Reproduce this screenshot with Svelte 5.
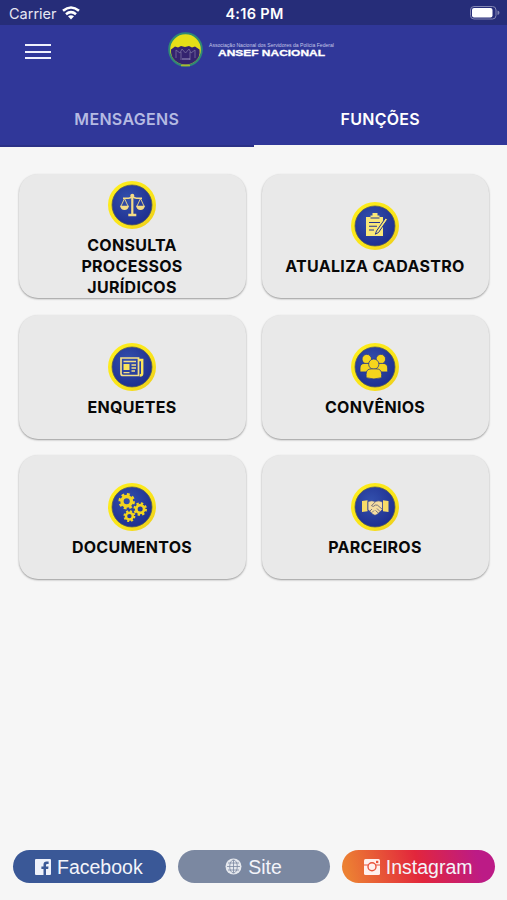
<script lang="ts">
	type IconName = "scales" | "clipboard" | "news" | "people" | "gears" | "handshake";

	const tiles: { label: string; icon: IconName }[] = [
		{ label: "CONSULTA PROCESSOS JURÍDICOS", icon: "scales" },
		{ label: "ATUALIZA CADASTRO", icon: "clipboard" },
		{ label: "ENQUETES", icon: "news" },
		{ label: "CONVÊNIOS", icon: "people" },
		{ label: "DOCUMENTOS", icon: "gears" },
		{ label: "PARCEIROS", icon: "handshake" },
	];

	const gears = [
		{ x: 18.7, y: 18.3, s: 0.97 },
		{ x: 32.2, y: 26, s: 0.8 },
		{ x: 21.4, y: 33.1, s: 0.7 },
	];

	let active = $state("funcoes");
</script>

{#snippet badge(name: IconName)}
	<svg class="badge" viewBox="0 0 48 48" aria-hidden="true">
		<defs>
			<radialGradient id="disc-{name}" cx="40%" cy="35%" r="65%">
				<stop offset="0" stop-color="#3350ad" />
				<stop offset="1" stop-color="#1f3090" />
			</radialGradient>
			<linearGradient id="ring-{name}" x1="0" y1="0" x2="1" y2="1">
				<stop offset="0" stop-color="#fff01c" />
				<stop offset="0.7" stop-color="#f8e11a" />
				<stop offset="1" stop-color="#e8c41e" />
			</linearGradient>
		</defs>
		<circle cx="24" cy="24" r="24" fill="url(#ring-{name})" />
		<circle cx="24" cy="24" r="20" fill="url(#disc-{name})" stroke="#5b6055" stroke-width="0.8" />
		{#if name === "scales"}
			<g fill="none" stroke="#f5dc86" stroke-width="1.2" stroke-linejoin="round">
				<path d="M24.3 14v20" stroke-width="2.2" />
				<path d="M15 17.2h5.5q2 0 4-1.8 2 1.8 4 1.8H34" stroke-width="1.6" />
				<path d="M16.5 17.5l-3.7 8M16.5 17.5l3.7 8M32.5 17.5l-3.7 8M32.5 17.5l3.7 8" stroke-width="0.9" />
			</g>
			<path d="M12 24.8h9q-.8 4.2-4.500 4.200T12 24.800zM28 24.800h9q-.8 4.200-4.500 4.200T28 24.800zM20.300 32.800h8v2.400h-8z" fill="#f5dc86" />
			<circle cx="24.3" cy="14.8" r="2" fill="#f5dc86" />
		{:else if name === "clipboard"}
			<path d="M15 15h4.500v-1.500h2V11h5v2.500h2V15H32v19H15z" fill="#fae878" />
			<path d="M19.500 16h9M18 20.500h11M18 24.200h8M18 28h5" stroke="#23358f" stroke-width="1.1" />
			<path d="M34.500 16l-9 13-1.200 3.200 3.200-1.700 9-13z" fill="#fae878" stroke="#23358f" stroke-width="1" />
		{:else if name === "news"}
			<path d="M13 15h17.500v17.500H15q-2 0-2-2z" fill="none" stroke="#f5df85" stroke-width="1.7" />
			<path d="M30.500 17h3.700v13.500q0 2-2.500 2" fill="none" stroke="#fae45a" stroke-width="2.4" />
			<path d="M15.500 21h6v6h-6z" fill="#fae45a" />
			<path d="M15.500 18.500H28M23.500 22H28M23.500 25H28M23.500 28H27M15.500 29.700h6" stroke="#f5df85" stroke-width="1.3" />
		{:else if name === "people"}
			<g transform="translate(-0.7 0.3) scale(0.97)" fill="#f6d51d" stroke="#23358f" stroke-width="0.8">
				<circle cx="17" cy="16.3" r="4.9" />
				<path d="M10 29.500v-4q0-4.800 5-4.800h5q4 0 4 4v4.800z" />
				<circle cx="31.500" cy="16.3" r="4.9" />
				<path d="M38.500 29.500v-4q0-4.800-5-4.800h-5q-4 0-4 4v4.800z" />
				<circle cx="24.2" cy="21.5" r="5.3" />
				<path d="M16.300 35.500V32q0-5.600 5.300-5.600h5.400q5.300 0 5.300 5.600v3.500q-8 2.500-16 0z" />
			</g>
		{:else if name === "gears"}
			{#each gears as gear}
				<g transform="translate({gear.x} {gear.y}) scale({gear.s})" fill="none" stroke="#f3d51e">
					<circle r="4.9" stroke-width="3.5" />
					<circle r="7.1" stroke-width="2.8" stroke-dasharray="2.9 2.676" />
				</g>
			{/each}
		{:else}
			<path d="M11 18l5.500-.7v11L11 29zM37.500 18l-5.500-.7v11l5.500.7z" fill="#f8dc67" />
			<path
				d="M17 18.500q4-1.500 7 0 4-1.500 7.500.5v7.500L26 31.500q-2 1.500-4 0L17 26.500z"
				fill="#f5dda0"
				stroke="#23358f"
				stroke-width="0.6"
			/>
			<path
				d="M24.500 18.700l-4 4q1.500 1.800 4-.7l2 .2 5 4.300M19 28l2-2M21 29.500l2-2M26 25.500l3 3M24.500 27.500l3 2.700"
				fill="none"
				stroke="#585874"
				stroke-width="0.8"
			/>
		{/if}
	</svg>
{/snippet}

<div class="screen">
	<div class="status">
		<div class="carrier">
			<span>Carrier</span>
			<svg width="18" height="14" viewBox="0 0 18 14" aria-hidden="true">
				<g fill="none" stroke="#fff" stroke-width="2.6">
					<path d="M1 4.800Q9-1.800 17 4.800" />
					<path d="M4 8.200Q9 4 14 8.200" />
				</g>
				<path d="M6 10.300Q9 8 12 10.300L9 13.400z" fill="#fff" />
			</svg>
		</div>
		<span class="time">4:16 PM</span>
		<svg class="battery" width="30" height="14" viewBox="0 0 30 14" aria-hidden="true">
			<rect x="0.5" y="0.5" width="25.5" height="12.5" rx="3.5" fill="none" stroke="#8487b4" />
			<rect x="2" y="2" width="20.5" height="9.5" rx="2" fill="#fff" />
			<path d="M27.500 4.500q2 .4 2 2.300t-2 2.300z" fill="#8487b4" />
		</svg>
	</div>

	<header>
		<button class="menu" aria-label="Menu"><span></span><span></span><span></span></button>
		<svg class="logo" width="168" height="38" viewBox="0 0 168 38" role="img" aria-label="ANSEF Nacional">
			<circle cx="18.5" cy="18.5" r="16.3" fill="#e5df17" stroke="#2f8975" stroke-width="2" />
			<path d="M4 18.500l4-3 3 1 3-1.500 4 1 4-1 3 1.500 3-1 4.500 3q1 7-3.500 11T18.500 33.500 8 29.500 4 18.500z" fill="#34236f" />
			<path d="M9 27v-8l4 3 2-4 3.500 4 3.500-4 2 4 4-3v8M14 21v8M23 21v8" fill="none" stroke="#7870a0" stroke-width="0.8" />
			<path d="M15 28h8" stroke="#9b96bf" />
			<path d="M14 34.500h9" stroke="#a9b931" stroke-width="1.5" />
			<text class="logo-small" x="42" y="16" textLength="125" lengthAdjust="spacingAndGlyphs">Associação Nacional dos Servidores da Polícia Federal</text>
			<text class="logo-name" x="51" y="25" textLength="107" lengthAdjust="spacingAndGlyphs">ANSEF NACIONAL</text>
		</svg>
	</header>

	<nav>
		<button class:active={active === "mensagens"} onclick={() => (active = "mensagens")}>MENSAGENS</button>
		<button class:active={active === "funcoes"} onclick={() => (active = "funcoes")}>FUNÇÕES</button>
	</nav>

	<main>
		{#each tiles as tile}
			<button class="tile">
				{@render badge(tile.icon)}
				<span class="label">{tile.label}</span>
			</button>
		{/each}
	</main>

	<footer>
		<button class="pill facebook">
			<svg width="16" height="16" viewBox="0 0 16 16" aria-hidden="true">
				<path
					d="M1 0h14q1 0 1 1v14q0 1-1 1h-4v-6h2.200l.3-2.400H11V6.100q0-1.200 1.200-1.200h1.400V2.600h-2Q8.500 2.600 8.500 5.600v2H6.400V10h2.100v6H1q-1 0-1-1V1q0-1 1-1z"
					fill="#eef1fa"
				/>
			</svg>
			<span>Facebook</span>
		</button>
		<button class="pill site">
			<svg width="17" height="17" viewBox="0 0 17 17" aria-hidden="true">
				<circle cx="8.5" cy="8.5" r="8" fill="#e5e8ee" />
				<g fill="none" stroke="#7b88a1" stroke-width="0.8">
					<path d="M8.500 2v13M2 8.500h13M3 5h11M3 12h11" />
					<ellipse cx="8.5" cy="8.5" rx="3.8" ry="6.5" />
				</g>
			</svg>
			<span>Site</span>
		</button>
		<button class="pill instagram">
			<svg width="16" height="16" viewBox="0 0 16 16" aria-hidden="true">
				<rect width="16" height="16" rx="1.5" fill="#fff0ee" />
				<path d="M0 6h4.500M11.500 6H16" stroke="#e9533b" stroke-width="1.2" />
				<circle cx="8" cy="7.8" r="4" fill="#fff0ee" stroke="#e9533b" stroke-width="1.4" />
				<rect x="12" y="1.8" width="2.3" height="2.3" fill="#e9533b" />
			</svg>
			<span>Instagram</span>
		</button>
	</footer>
</div>

<style>
	:global(body) {
		background: #f6f6f6;
	}

	.screen {
		display: flex;
		flex-direction: column;
		height: 900px;
		background: #f6f6f6;
		font-family: Inter, "Liberation Sans", sans-serif;
	}

	button {
		margin: 0;
		padding: 0;
		border: 0;
		background: none;
		font: inherit;
	}

	.status {
		display: grid;
		grid-template-columns: 1fr auto 1fr;
		align-items: center;
		box-sizing: border-box;
		height: 25px;
		padding: 2px 7px 0 9px;
		background: #262d79;
		color: #fff;
		font-size: 14.5px;
	}

	.carrier {
		display: flex;
		align-items: center;
		gap: 5px;
		color: #e6e7f2;
	}

	.carrier svg {
		margin-top: -2px;
	}

	.time {
		font-weight: 600;
		letter-spacing: 0.3px;
	}

	.battery {
		justify-self: end;
		margin-top: -1px;
	}

	header {
		display: flex;
		align-items: flex-start;
		height: 68px;
		background: #303799;
	}

	.menu {
		display: flex;
		flex-direction: column;
		gap: 4.5px;
		width: 26px;
		margin: 19px 0 0 24.5px;
	}

	.menu span {
		height: 2px;
		background: #f0f1fc;
	}

	.logo {
		margin: 6px 0 0 116.5px;
	}

	.logo-small {
		fill: #c5c8e8;
		font: 5px "Liberation Sans", sans-serif;
	}

	.logo-name {
		fill: #fff;
		font: 700 9.5px "Liberation Sans", sans-serif;
		stroke: #fff;
		stroke-width: 0.3;
	}

	nav {
		display: flex;
		height: 54px;
		background: #303799;
	}

	nav button {
		flex: 1;
		box-sizing: border-box;
		border-bottom: 2px solid #2b3187;
		color: #b5bae2;
		font-size: 16px;
		font-weight: 600;
		letter-spacing: 0.3px;
	}

	nav .active {
		border-color: #f6f6f6;
		color: #fff;
	}

	main {
		display: grid;
		grid-template-columns: 1fr 1fr;
		grid-auto-rows: 124px;
		gap: 16.5px 16px;
		flex: 1;
		align-content: start;
		padding: 27px 18px 0 19px;
	}

	.tile {
		display: flex;
		flex-direction: column;
		align-items: center;
		justify-content: center;
		gap: 6px;
		padding: 7px 1px 0 0;
		border-radius: 19px;
		background: #e9e9e9;
		box-shadow: 0 1px 2px rgb(0 0 0 / 38%);
	}

	.badge {
		flex: none;
		width: 48px;
		height: 48px;
	}

	.label {
		max-width: 190px;
		color: #080808;
		font-size: 16px;
		font-weight: 650;
		line-height: 21px;
		letter-spacing: 0.3px;
	}

	.tile:first-child .label {
		max-width: 120px;
	}

	footer {
		display: flex;
		gap: 12px;
		padding: 0 12px 17px 13px;
	}

	.pill {
		display: flex;
		flex: 1 1 0;
		box-sizing: border-box;
		align-items: center;
		justify-content: center;
		gap: 6px;
		height: 33px;
		padding-right: 1px;
		border-radius: 17px;
		color: #f3f4fa;
		font-family: "Liberation Sans", sans-serif;
		font-size: 19.5px;
	}

	.pill span {
		padding-top: 2px;
	}

	.facebook {
		background: #3a5897;
	}

	.site {
		background: #7b88a1;
	}

	.instagram {
		background: linear-gradient(75deg, #ec8033 5%, #e2263c 50%, #bc1b86 88%);
	}
</style>
